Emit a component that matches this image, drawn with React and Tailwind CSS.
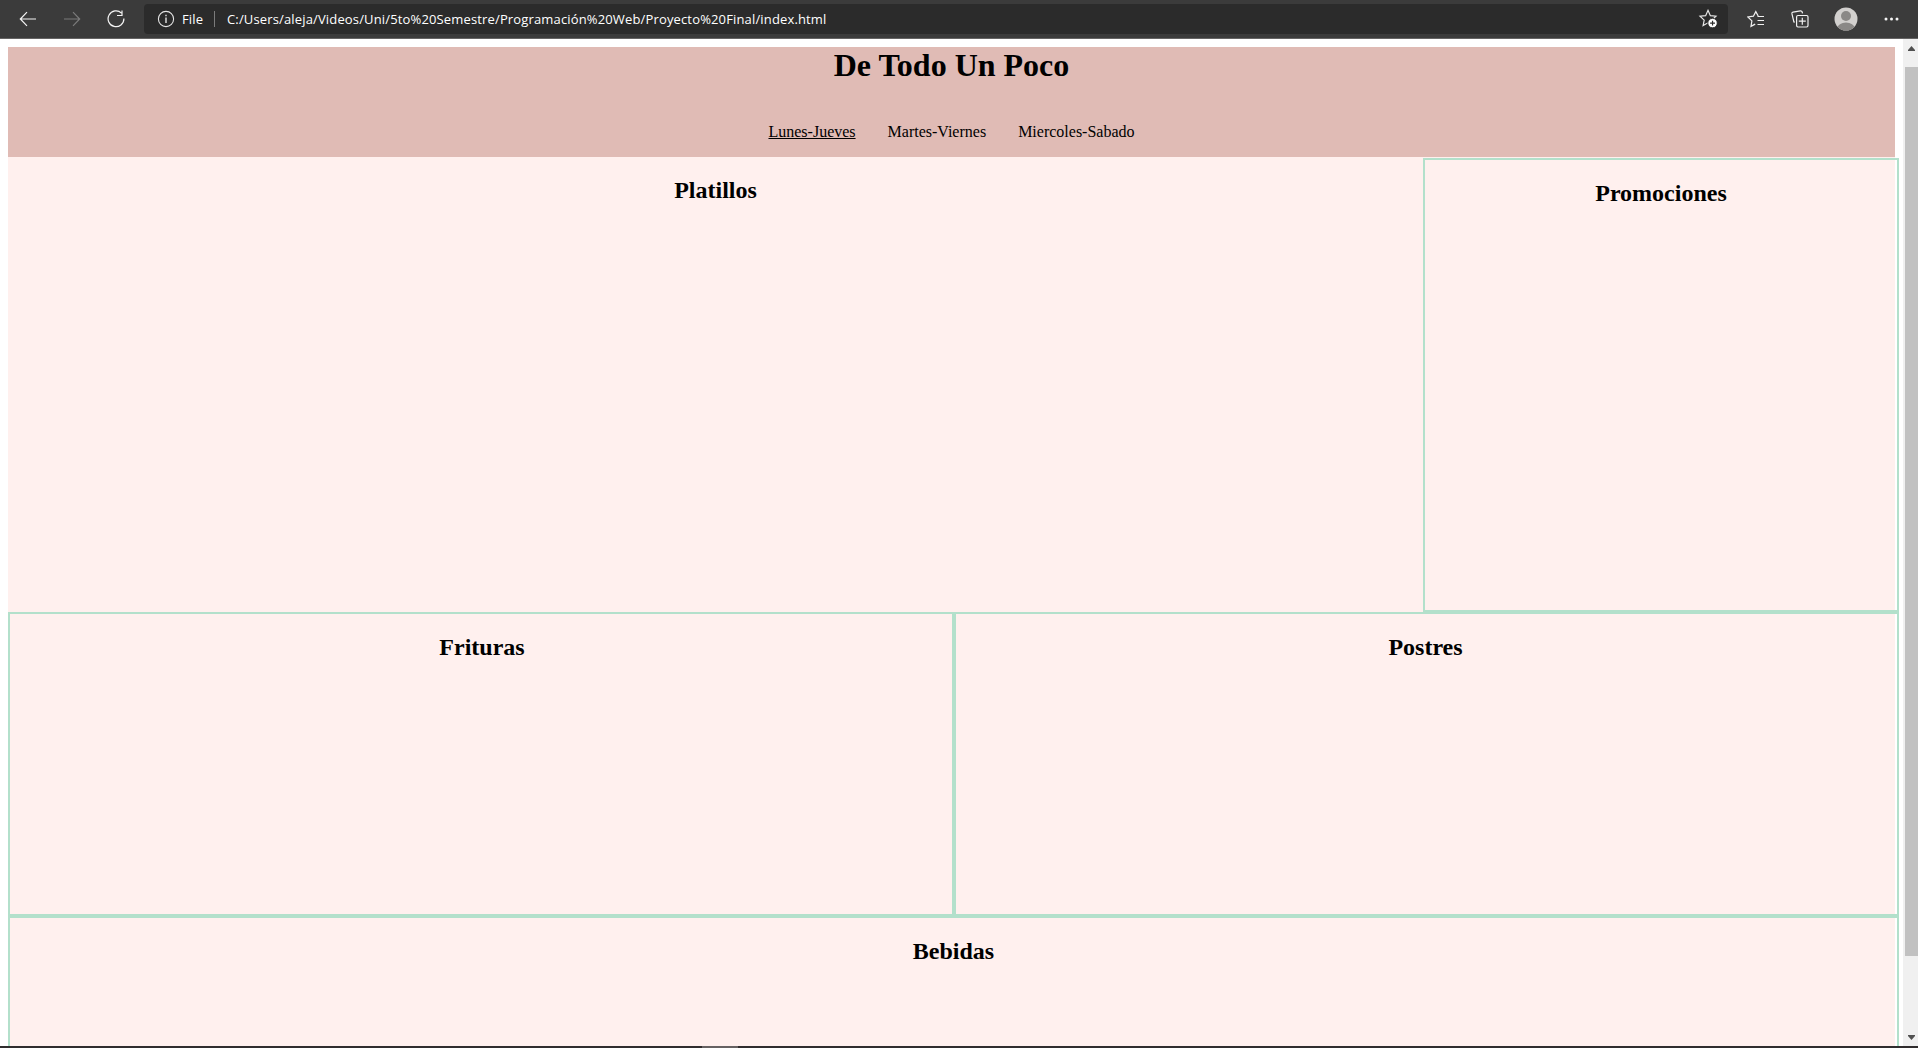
const star = "M11 1.5 13.6 7.3 19.8 8 15.2 12.2 16.4 18.3 11 15.2 5.6 18.3 6.8 12.2 2.2 8 8.4 7.3Z";

function Toolbar() {
  return (
    <header className="flex h-[39px] shrink-0 items-start border-b border-[#656464] bg-[#3b3b3b] font-['Open_Sans',sans-serif] text-[13px] text-white">
      <div className="flex h-[38px] w-36 shrink-0 items-center">
        <svg className="ml-[19px] h-4 w-[18px]" viewBox="0 0 18 16" fill="none" stroke="#f4f4f4" strokeWidth="1.2">
          <path d="M17 8H1.5M8 1.2 1.3 8 8 14.8" />
        </svg>
        <svg className="ml-[26px] h-4 w-[18px]" viewBox="0 0 18 16" fill="none" stroke="#7b7b7b" strokeWidth="1.2">
          <path d="M1 8h15.5M10 1.2 16.7 8 10 14.8" />
        </svg>
        <svg className="ml-[26px] h-[18px] w-[18px]" viewBox="0 0 18 18" fill="none" stroke="#f4f4f4" strokeWidth="1.2">
          <path d="M14.5 3.1A7.9 7.9 0 1 0 16.9 8.6M15 .5v5h-5" />
        </svg>
      </div>
      <div className="mt-1 flex h-[30px] min-w-0 flex-1 items-center rounded bg-[#2b2b2b]">
        <svg className="ml-[13px] h-[18px] w-[18px] shrink-0" viewBox="0 0 18 18" fill="none" stroke="#e4e4e4" strokeWidth="1.1">
          <circle cx="9" cy="9" r="7.6" />
          <path d="M9 7.5v5.5M9 4.7v1.5" strokeWidth="1.4" />
        </svg>
        <span className="ml-[7px] w-8 leading-4 tracking-[0.14px]">File</span>
        <span className="h-4 w-px bg-[#7b7b7b]" />
        <span className="ml-3 whitespace-nowrap leading-4 tracking-[0.15px]">
          C:/Users/aleja/Videos/Uni/5to%20Semestre/Programación%20Web/Proyecto%20Final/index.html
        </span>
        <svg className="mr-2.5 ml-auto h-5 w-5 shrink-0" viewBox="0 0 22 22" fill="none" stroke="#e8e8e8" strokeWidth="1.3">
          <path d={star} />
          <circle cx="16" cy="15.5" r="5.2" fill="#fff" stroke="#2b2b2b" strokeWidth="1" />
          <path d="M16 12.8v5.4M13.3 15.5h5.4" stroke="#2b2b2b" />
        </svg>
      </div>
      <div className="flex h-[38px] w-[190px] shrink-0 items-center">
        <svg className="ml-[19px] h-[18px] w-[18px]" viewBox="0 0 18 18" fill="none" stroke="#f0f0f0" strokeWidth="1.2">
          <path d="M11.2 6 8.8 1.6 6.4 6.2.9 7l4 3.9-.9 5.4 4.2-2.2M10.5 6.5H17M10.5 10.5H17M10.5 14.5H17" />
        </svg>
        <svg className="ml-[26px] h-[18px] w-[18px]" viewBox="0 0 18 18" fill="none" stroke="#f0f0f0" strokeWidth="1.2">
          <path d="M3.8 12.2 2.9 12 .9 3.7Q.7 2.4 2 2.1L9.4.8Q10.8.7 11.2 2L11.5 3.4M7 5.5H15.6Q17 5.5 17 7V15.6Q17 17 15.6 17H7Q5.6 17 5.6 15.6V7Q5.6 5.5 7 5.5ZM11.3 7.7v7M7.8 11.2h7" />
        </svg>
        <svg className="ml-[25px] h-6 w-6" viewBox="0 0 24 24">
          <defs>
            <clipPath id="avatar"><circle cx="12" cy="12" r="11.5" /></clipPath>
          </defs>
          <circle cx="12" cy="12" r="11.5" fill="#d2d0ce" />
          <g fill="#8a8886" clipPath="url(#avatar)">
            <circle cx="12" cy="9" r="5" />
            <ellipse cx="12" cy="21" rx="8.6" ry="5.4" />
          </g>
        </svg>
        <svg className="ml-[26px] h-1 w-[15px]" viewBox="0 0 15 4" fill="#f5f5f5">
          <circle cx="2" cy="2" r="1.5" /><circle cx="7.5" cy="2" r="1.5" /><circle cx="13" cy="2" r="1.5" />
        </svg>
      </div>
    </header>
  );
}

function Scrollbar() {
  return (
    <div className="flex w-[15px] shrink-0 flex-col bg-[#f0f0f0] pl-0.5">
      <div className="flex h-7 pt-[7px] pl-[3px]">
        <svg className="h-[5px] w-[7px]" viewBox="0 0 7 5" fill="#505050"><path d="M0 4 3.5 0 7 4V5H0Z" /></svg>
      </div>
      <div className="h-[889px] bg-[#c1c1c1]" />
      <div className="flex flex-1 pt-[79px] pl-[3px]">
        <svg className="h-[5px] w-[7px]" viewBox="0 0 7 5" fill="#505050"><path d="M0 1 3.5 5 7 1V0H0Z" /></svg>
      </div>
    </div>
  );
}

function Panel({ title, className }) {
  return (
    <section className={"border-2 border-[#b3e0cb] pt-[19px] " + className}>
      <h2 className="text-center text-2xl leading-7 font-bold">{title}</h2>
    </section>
  );
}

export default function App() {
  return (
    <div className="flex h-[1048px] w-[1918px] flex-col overflow-hidden bg-white font-['Liberation_Serif',serif] text-black">
      <Toolbar />
      <div className="flex h-[1007px]">
        <main className="flex min-w-0 flex-1 flex-col overflow-hidden pt-2 pl-2">
          <div className="h-[110px] w-[1887px] shrink-0 bg-[#e0bbb5]">
            <h1 className="text-center text-[32px] leading-9 font-bold">De Todo Un Poco</h1>
            <nav className="mt-10 flex justify-center gap-8 text-base leading-[18px]">
              <a className="underline">Lunes-Jueves</a>
              <a>Martes-Viernes</a>
              <a>Miercoles-Sabado</a>
            </nav>
          </div>
          <div className="w-[1887px] flex-1 bg-[#fff0ee]">
            <div className="w-[1891px]">
              <div className="flex h-[455px]">
                <section className="w-[1415px] pt-[19px]">
                  <h2 className="text-center text-2xl leading-7 font-bold">Platillos</h2>
                </section>
                <Panel title="Promociones" className="mt-px w-[476px]" />
              </div>
              <div className="flex h-[304px]">
                <Panel title="Frituras" className="w-[946px] pl-0.5" />
                <Panel title="Postres" className="w-[945px] pr-0.5" />
              </div>
              <Panel title="Bebidas" className="h-[304px]" />
            </div>
          </div>
        </main>
        <Scrollbar />
      </div>
      <div className="flex h-0.5 bg-[#302d2e]">
        <span className="ml-[702px] w-[36px] bg-[#666162]" />
      </div>
    </div>
  );
}
